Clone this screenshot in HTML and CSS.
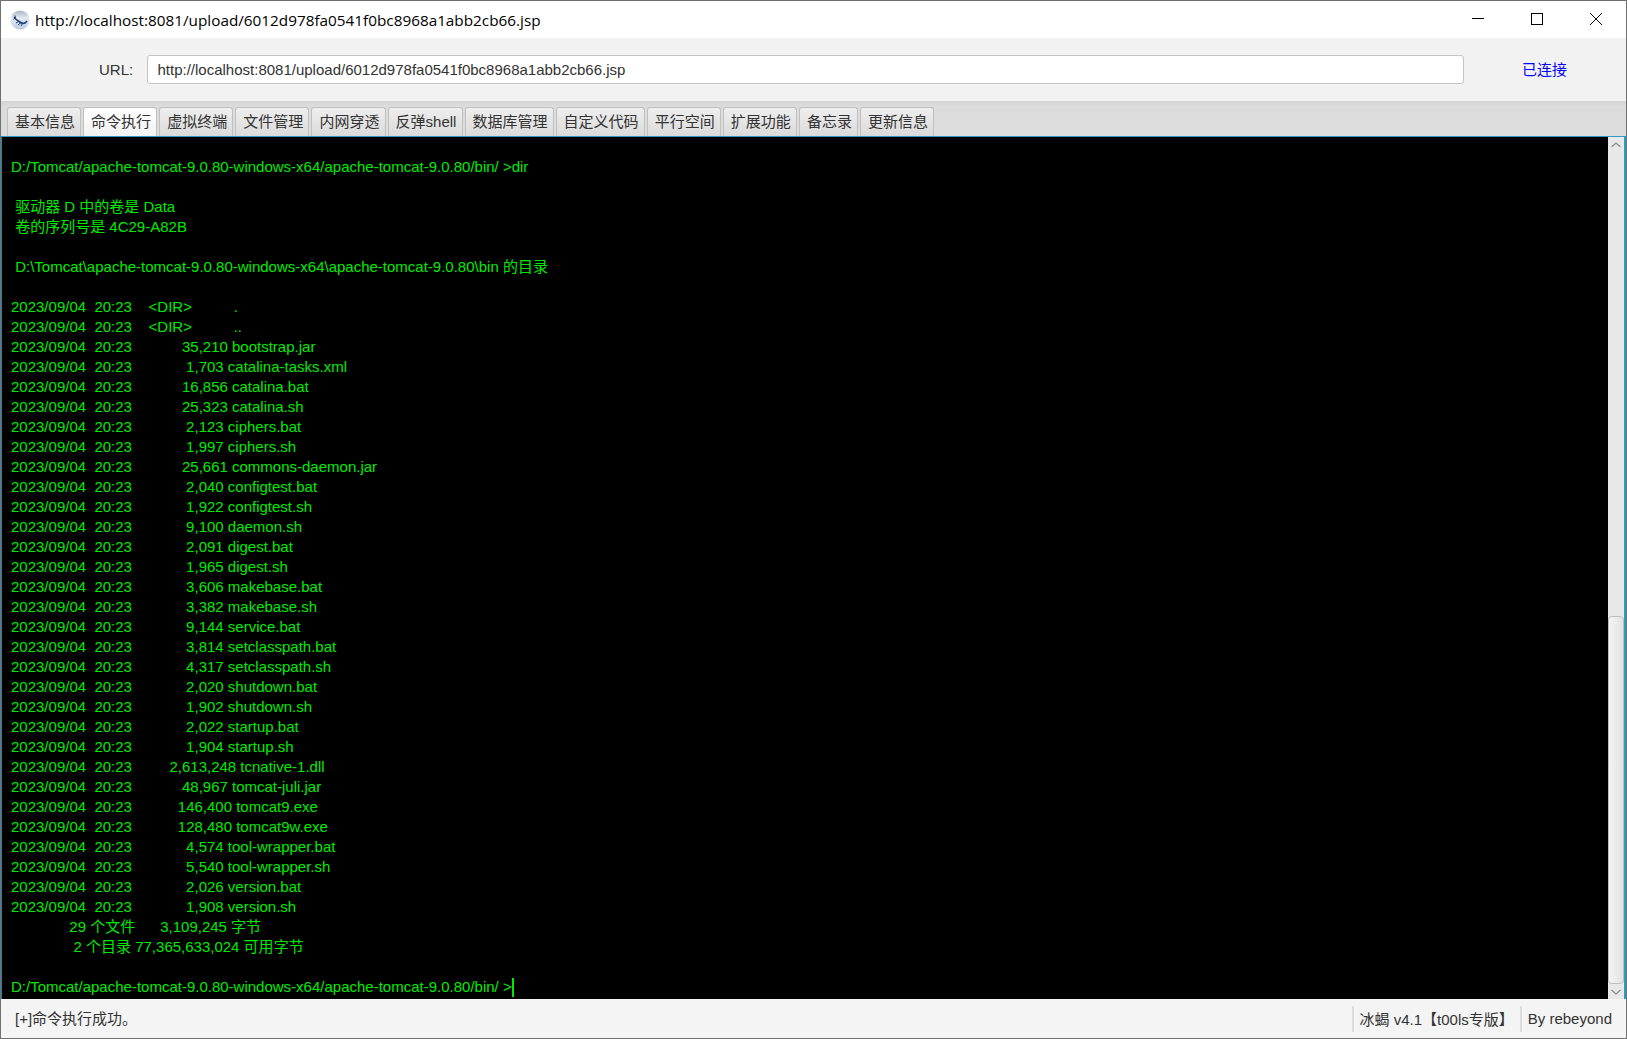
FILE: index.html
```html
<!DOCTYPE html>
<html lang="zh">
<head>
<meta charset="utf-8">
<title>冰蝎</title>
<link rel="stylesheet" href="styles.css">
</head>
<body>
<div class="window">
  <header class="titlebar">
    <svg class="app-icon" viewBox="0 0 20 20" width="20" height="20" aria-hidden="true">
      <defs><linearGradient id="globe" x1="0" y1="0" x2="0" y2="1"><stop offset="0" stop-color="#a9b4c4"/><stop offset=".4" stop-color="#e4e9f1"/><stop offset="1" stop-color="#bccbe0"/></linearGradient></defs>
      <circle cx="10" cy="10" r="9.500" fill="url(#globe)"/>
      <path d="M4 7c1 2 3 3 5 4.500s4 2.500 6 1.500l2-2" fill="none" stroke="#1d3c78" stroke-width="1.600"/>
      <path d="M6 13l3-2M8 15l3-2.500M11 16l1.500-2.500M3.500 9.500L5 8M5 5.500l.5 2.500" fill="none" stroke="#1d3c78" stroke-width="1"/>
    </svg>
    <span class="window-title">http://localhost:8081/upload/6012d978fa0541f0bc8968a1abb2cb66.jsp</span>
    <div class="window-controls">
      <svg viewBox="0 0 12 12" width="12" height="12" aria-hidden="true"><path d="M0 5.500h12" stroke="#000" fill="none"/></svg>
      <svg viewBox="0 0 12 12" width="12" height="12" aria-hidden="true"><rect x=".5" y=".5" width="11" height="11" stroke="#000" fill="none"/></svg>
      <svg viewBox="0 0 12 12" width="12" height="12" aria-hidden="true"><path d="M0 0l12 12M12 0L0 12" stroke="#000" fill="none"/></svg>
    </div>
  </header>
  <section class="urlbar">
    <label class="url-label">URL:</label>
    <div class="url-input">http://localhost:8081/upload/6012d978fa0541f0bc8968a1abb2cb66.jsp</div>
    <span class="url-status">已连接</span>
  </section>
  <nav class="tabs">
    <span class="tab">基本信息</span>
    <span class="tab active">命令执行</span>
    <span class="tab">虚拟终端</span>
    <span class="tab">文件管理</span>
    <span class="tab">内网穿透</span>
    <span class="tab">反弹shell</span>
    <span class="tab">数据库管理</span>
    <span class="tab">自定义代码</span>
    <span class="tab">平行空间</span>
    <span class="tab">扩展功能</span>
    <span class="tab">备忘录</span>
    <span class="tab">更新信息</span>
  </nav>
  <main class="terminal">
    <pre class="console">D:/Tomcat/apache-tomcat-9.0.80-windows-x64/apache-tomcat-9.0.80/bin/ &gt;dir

 驱动器 D 中的卷是 Data
 卷的序列号是 4C29-A82B

 D:\Tomcat\apache-tomcat-9.0.80-windows-x64\apache-tomcat-9.0.80\bin 的目录

2023/09/04  20:23    &lt;DIR&gt;          .
2023/09/04  20:23    &lt;DIR&gt;          ..
2023/09/04  20:23            35,210 bootstrap.jar
2023/09/04  20:23             1,703 catalina-tasks.xml
2023/09/04  20:23            16,856 catalina.bat
2023/09/04  20:23            25,323 catalina.sh
2023/09/04  20:23             2,123 ciphers.bat
2023/09/04  20:23             1,997 ciphers.sh
2023/09/04  20:23            25,661 commons-daemon.jar
2023/09/04  20:23             2,040 configtest.bat
2023/09/04  20:23             1,922 configtest.sh
2023/09/04  20:23             9,100 daemon.sh
2023/09/04  20:23             2,091 digest.bat
2023/09/04  20:23             1,965 digest.sh
2023/09/04  20:23             3,606 makebase.bat
2023/09/04  20:23             3,382 makebase.sh
2023/09/04  20:23             9,144 service.bat
2023/09/04  20:23             3,814 setclasspath.bat
2023/09/04  20:23             4,317 setclasspath.sh
2023/09/04  20:23             2,020 shutdown.bat
2023/09/04  20:23             1,902 shutdown.sh
2023/09/04  20:23             2,022 startup.bat
2023/09/04  20:23             1,904 startup.sh
2023/09/04  20:23         2,613,248 tcnative-1.dll
2023/09/04  20:23            48,967 tomcat-juli.jar
2023/09/04  20:23           146,400 tomcat9.exe
2023/09/04  20:23           128,480 tomcat9w.exe
2023/09/04  20:23             4,574 tool-wrapper.bat
2023/09/04  20:23             5,540 tool-wrapper.sh
2023/09/04  20:23             2,026 version.bat
2023/09/04  20:23             1,908 version.sh
              29 个文件      3,109,245 字节
               2 个目录 77,365,633,024 可用字节

D:/Tomcat/apache-tomcat-9.0.80-windows-x64/apache-tomcat-9.0.80/bin/ &gt;<span class="caret"></span></pre>
    <div class="scrollbar">
      <div class="scroll-btn"><svg viewBox="0 0 12 8" width="12" height="8" aria-hidden="true"><path d="M1.500 6L6 2l4.500 4" fill="none" stroke="#8a8a8a" stroke-width="1.200"/></svg></div>
      <div class="scroll-track"><div class="scroll-thumb"></div></div>
      <div class="scroll-btn"><svg viewBox="0 0 12 8" width="12" height="8" aria-hidden="true"><path d="M1.500 2L6 6l4.500-4" fill="none" stroke="#8a8a8a" stroke-width="1.200"/></svg></div>
    </div>
  </main>
  <footer class="statusbar">
    <span class="status-msg">[+]命令执行成功。</span>
    <span class="status-cell">冰蝎 v4.1【t00ls专版】</span>
    <span class="status-cell">By rebeyond</span>
  </footer>
</div>
</body>
</html>
```
FILE: styles.css
```css
* { box-sizing: border-box; }
html, body { margin: 0; height: 100%; overflow: hidden; }
body { font-family: "Liberation Sans", "Noto Sans CJK SC", sans-serif; }
.window {
  height: 1039px;
  display: flex;
  flex-direction: column;
  border: 1px solid #707070;
  background: #f2f2f2;
}
.titlebar {
  height: 37px;
  background: #fff;
  display: flex;
  align-items: center;
  padding-left: 9px;
  flex: none;
}
.app-icon { flex: none; }
.window-title { margin-left: 5px; padding-top: 1px; font-size: 15.3px; color: #000; font-family: "Open Sans", "Liberation Sans", sans-serif; }
.window-controls { margin-left: auto; display: flex; gap: 47px; padding: 0 24px 2px 0; align-items: center; }
.urlbar {
  height: 63px;
  flex: none;
  display: flex;
  align-items: center;
  background: #f2f2f2;
  padding-left: 98px;
}
.url-label { font-size: 15px; color: #333; width: 48px; padding-bottom: 1px; }
.url-input {
  width: 1317px;
  height: 29px;
  background: #fff;
  border: 1px solid #c4c4c4;
  border-radius: 3px;
  font-size: 15px;
  color: #333;
  line-height: 27px;
  padding-left: 9.5px;
}
.url-status { margin-left: 58px; font-size: 15px; color: #0000ff; padding-bottom: 2px; }
.tabs {
  height: 35px;
  flex: none;
  display: flex;
  align-items: flex-end;
  gap: 2px;
  padding-left: 6px;
  background: linear-gradient(#d4d4d4, #dcdcdc 5px);
}
.tab {
  height: 29px;
  padding: 0 5.1px 3px 7px;
  display: flex;
  align-items: center;
  font-size: 15px;
  color: #333;
  border: 1px solid #c0c0c0;
  border-bottom: 0;
  border-radius: 3px 3px 0 0;
  background: linear-gradient(#eeeeee, #dadada);
}
.tab.active { background: linear-gradient(#ffffff, #f2f2f2); }
.terminal {
  flex: 1;
  min-height: 0;
  display: flex;
  background: #000;
  border-top: 1px solid #2f9bc4;
  border-left: 1px solid #2f7fa0;
  border-right: 2px solid #2f9bc4;
}
.console {
  flex: 1;
  margin: 0;
  padding: 19.5px 0 0 9px;
  font-family: "Liberation Sans", "Noto Sans CJK SC", sans-serif;
  font-size: 15px;
  line-height: 20px;
  color: #00ea00;
  white-space: pre;
  overflow: hidden;
}
.caret { display: inline-block; width: 2px; height: 19px; background: #00ea00; vertical-align: -5px; }
.scrollbar {
  width: 16px;
  flex: none;
  display: flex;
  flex-direction: column;
  background: #e8e8e8;
}
.scroll-btn { height: 15px; flex: none; display: flex; align-items: center; justify-content: center; }
.scroll-track { flex: 1; display: flex; flex-direction: column; justify-content: flex-end; }
.scroll-thumb {
  height: 368px;
  border: 1px solid #bdbdbd;
  border-radius: 4px;
  background: linear-gradient(90deg, #f4f4f4, #e2e2e2);
}
.statusbar {
  height: 39px;
  flex: none;
  display: flex;
  align-items: center;
  background: #f4f4f4;
  font-size: 15px;
  color: #333;
}
.status-msg { flex: 1; padding: 0 0 2px 14px; }
.status-cell { height: 26px; display: flex; align-items: center; border-left: 2px solid #dcdcdc; padding: 0 6px; }
.status-cell:last-child { padding-right: 14px; }
```
